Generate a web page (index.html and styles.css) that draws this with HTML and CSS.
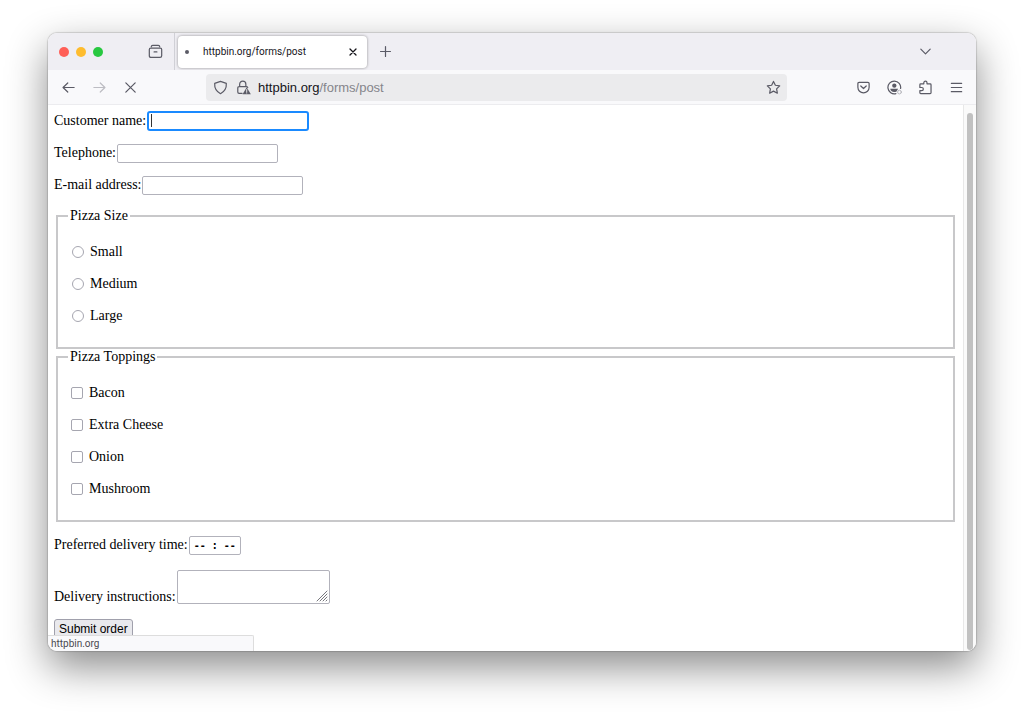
FILE: index.html
```
<!DOCTYPE html>
<html lang="en">
<head>
<meta charset="utf-8">
<title>httpbin.org/forms/post</title>
<link rel="stylesheet" href="styles.css">
</head>
<body>
<div class="window">
  <header class="tabstrip">
    <div class="lights"><span class="light red"></span><span class="light yellow"></span><span class="light green"></span></div>
    <button class="icon-btn view-btn" aria-label="Recent browsing">
      <svg class="icon" viewBox="0 0 16 16"><path d="M3.500 2.800Q3.600 1.400 5 1.400h6q1.400 0 1.500 1.400M2.800 4.400h10.400Q14.600 4.400 14.600 5.800v6.700q0 1.800-1.800 1.800H3.200q-1.800 0-1.800-1.800V5.800q0-1.400 1.400-1.400zM6.500 8.500h3"/></svg>
    </button>
    <div class="tab">
      <span class="loading"></span>
      <span class="tab-title">httpbin.org/forms/post</span>
      <button class="icon-btn close" aria-label="Close tab"><svg class="icon-small" viewBox="0 0 8 8"><path d="M1 1l6 6M7 1L1 7"/></svg></button>
    </div>
    <button class="icon-btn new-tab" aria-label="New tab"><svg class="icon" viewBox="0 0 16 16"><path d="M8 2.700v10.600M2.700 8h10.600"/></svg></button>
    <button class="icon-btn all-tabs" aria-label="List all tabs"><svg class="icon" viewBox="0 0 16 16"><path d="M3 5.500l5 5 5-5"/></svg></button>
  </header>
  <nav class="toolbar" aria-label="Navigation">
    <div class="group">
      <button class="icon-btn" aria-label="Back"><svg class="icon" viewBox="0 0 16 16"><path d="M14 8H2.500M7.200 3.200L2.200 8l5 4.800"/></svg></button>
      <button class="icon-btn faded" aria-label="Forward"><svg class="icon" viewBox="0 0 16 16"><path d="M2 8h11.500M8.800 3.200l5 4.800-5 4.800"/></svg></button>
      <button class="icon-btn" aria-label="Stop"><svg class="icon" viewBox="0 0 16 16"><path d="M3 3l10 10M13 3L3 13"/></svg></button>
    </div>
    <div class="urlbar">
      <button class="icon-btn" aria-label="Tracking protection"><svg class="icon" viewBox="0 0 16 16"><path d="M8 1.400l6.200 2.200q.5 7.500-6.200 11Q1.300 11.100 1.800 3.600z"/></svg></button>
      <button class="icon-btn" aria-label="Connection is not secure"><svg class="icon" viewBox="0 0 16 16"><path d="M3.900 7V4.500a3.300 3.300 0 0 1 6.600 0V7M6.500 14.200H3.300q-1.400 0-1.400-1.400V8.300Q1.900 7 3.300 7h7.900q1.300 0 1.300 1"/><path class="solid" d="M11.400 7.600l4.400 7.600H7z"/><path class="light-line" d="M11.400 10.200v2.200M11.400 13.500v.4"/></svg></button>
      <div class="address" role="textbox" aria-label="Address" contenteditable="true" spellcheck="false"><span class="host">httpbin.org</span>/forms/post</div>
      <button class="icon-btn" aria-label="Bookmark"><svg class="icon" viewBox="0 0 16 16"><path d="M8 1.500l2 4.100 4.600.7-3.300 3.200.8 4.600L8 11.900l-4.100 2.200.8-4.600L1.400 6.300 6 5.600z"/></svg></button>
    </div>
    <div class="group">
      <button class="icon-btn" aria-label="Pocket"><svg class="icon" viewBox="0 0 16 16"><path d="M3.300 2.500h9.400q1.300 0 1.300 1.300v4a6 6 0 0 1-12 0v-4q0-1.300 1.300-1.300zM5.100 6.400L8 9.100l2.900-2.700"/></svg></button>
      <button class="icon-btn" aria-label="Account"><svg class="icon" viewBox="0 0 16 16"><path d="M9.500 14.500A6.800 6.800 0 1 1 14.500 9"/><circle class="solid" cx="7.800" cy="6" r="2.300"/><path class="solid" d="M3.500 9.300h8.400l-2 3.100q-3.200 1.300-5.200-.6-1.200-1.200-1.200-2.500z"/><circle class="badge-dot" cx="13.300" cy="12.900" r="2"/></svg></button>
      <button class="icon-btn" aria-label="Extensions"><svg class="icon" viewBox="0 0 16 16"><path d="M2 6.200V5q0-.9.900-.9h3.300V2.900a1.700 1.700 0 0 1 3.400 0v1.200h3.300q1 0 1 .9v8.700q0 .9-1 .9h-10q-.9 0-.9-.9v-2.300h2a1.600 1.600 0 0 0 0-3.400H2z"/></svg></button>
      <button class="icon-btn" aria-label="Menu"><svg class="icon" viewBox="0 0 16 16"><path d="M2.500 3.500h11M2.500 8h11M2.500 12.500h11"/></svg></button>
    </div>
  </nav>
  <div class="viewport">
    <form class="order">
      <div class="row"><label for="name">Customer name:</label><input class="field focused" id="name" type="text"></div>
      <div class="row"><label for="tel">Telephone:</label><input class="field" id="tel" type="tel"></div>
      <div class="row"><label for="email">E-mail address:</label><input class="field" id="email" type="email"></div>
      <fieldset class="choices">
        <legend>Pizza Size</legend>
        <label class="choice"><input class="radio" type="radio" name="size">Small</label>
        <label class="choice"><input class="radio" type="radio" name="size">Medium</label>
        <label class="choice"><input class="radio" type="radio" name="size">Large</label>
      </fieldset>
      <fieldset class="choices toppings">
        <legend>Pizza Toppings</legend>
        <label class="choice"><input class="check" type="checkbox">Bacon</label>
        <label class="choice"><input class="check" type="checkbox">Extra Cheese</label>
        <label class="choice"><input class="check" type="checkbox">Onion</label>
        <label class="choice"><input class="check" type="checkbox">Mushroom</label>
      </fieldset>
      <div class="row"><label for="time">Preferred delivery time:</label><input class="field time" id="time" type="text" value="-- : --"></div>
      <div class="row instructions"><label for="notes">Delivery instructions:</label><span class="area"><textarea class="field notes" id="notes"></textarea><svg class="grip" viewBox="0 0 12 12"><path d="M1 11L11 1M4 11l7-7M7 11l4-4M10 11l1-1"/></svg></span></div>
      <button class="submit" type="button">Submit order</button>
    </form>
    <div class="scrollbar"><div class="thumb"></div></div>
    <div class="status">httpbin.org</div>
  </div>
</div>
</body>
</html>
```
FILE: styles.css
```
* { box-sizing: border-box; }
body {
  margin: 0;
  min-height: 100vh;
  padding: 33px 48px 63px;
  display: flex;
  background: #fff;
  color: #000;
  font-family: "Liberation Serif", serif;
  font-size: 14px;
}
.window {
  flex: 1;
  min-width: 0;
  display: flex;
  flex-direction: column;
  border-radius: 9px;
  overflow: hidden;
  background: #fff;
  box-shadow: 0 0 1px 1px rgba(0, 0, 0, .14), 0 16px 40px rgba(0, 0, 0, .46);
}
button { font: inherit; color: inherit; }
.icon-btn {
  flex: none;
  display: flex;
  align-items: center;
  justify-content: center;
  width: 16px;
  height: 16px;
  padding: 0;
  border: 0;
  background: none;
  color: #5b5b66;
}
.icon { width: 15px; height: 15px; }
.icon-small { width: 8px; height: 8px; }
svg {
  display: block;
  fill: none;
  stroke: currentColor;
  stroke-width: 1.3;
  stroke-linecap: round;
  stroke-linejoin: round;
}
.solid { fill: currentColor; stroke: none; }
.light-line { stroke: #ebebed; stroke-width: 1; }
.badge-dot { stroke: #b4b4bb; stroke-width: 1; }
.faded { color: #bdbdc3; }

.tabstrip {
  display: flex;
  align-items: center;
  height: 37px;
  padding: 0 43px 0 11px;
  background: #efeef3;
}
.lights { display: flex; gap: 7px; }
.light { width: 10px; height: 10px; border-radius: 50%; }
.red { background: #ff5f57; }
.yellow { background: #febc2e; }
.green { background: #28c840; }
.view-btn { margin-left: 44px; }
.tab {
  display: flex;
  align-items: center;
  width: 189px;
  height: 32px;
  margin-left: 15px;
  padding: 0 6px 0 7px;
  border-radius: 4px;
  background: #fff;
  box-shadow: 0 0 3px rgba(0, 0, 0, .4);
  font-family: Roboto, sans-serif;
  font-size: 10px;
  color: #15141a;
}
.tab::before {
  content: "";
  width: 1px;
  height: 37px;
  margin-left: -11px;
  margin-right: 10px;
  background: #d0d0d6;
}
.loading { width: 4px; height: 4px; border-radius: 50%; background: #5b5b66; }
.tab-title { flex: 1; margin-left: 14px; white-space: nowrap; }
.close { color: #15141a; }
.new-tab { margin-left: 10px; }
.all-tabs { margin-left: auto; }

.toolbar {
  display: flex;
  align-items: center;
  justify-content: space-between;
  height: 35px;
  padding: 0 12px;
  border-bottom: 1px solid #ececef;
  background: #f9f9fb;
}
.group { display: flex; gap: 15px; }
.urlbar {
  flex: 1;
  display: flex;
  align-items: center;
  gap: 7px;
  height: 27px;
  margin: 0 68px;
  padding: 0 6px;
  border-radius: 4px;
  background: #ebebed;
}
.address {
  flex: 1;
  font-family: "Liberation Sans", sans-serif;
  font-size: 13px;
  color: #85858b;
  white-space: nowrap;
}
.host { color: #15141a; }

.viewport {
  position: relative;
  flex: 1;
  display: flex;
}
.order { flex: 1; padding: 6px 6px 0; }
.row {
  display: flex;
  align-items: center;
  gap: 1px;
  min-height: 20px;
  margin-bottom: 12px;
}
.field {
  width: 161px;
  height: 19px;
  padding: 1px 4px;
  border: 1px solid #b2b2bb;
  border-radius: 2px;
  background: #fff;
}
.focused {
  width: 162px;
  height: 20px;
  border: 2px solid #1a8aff;
  border-radius: 3px;
  background: linear-gradient(#333, #333) 2px 1px / 1px 13px no-repeat #fff;
}
.choices {
  display: flex;
  flex-direction: column;
  gap: 12px;
  min-width: 0;
  margin: 13px 2px 0;
  padding: 18px 10px 21px;
  border: 2px solid #c8c8ca;
}
.toppings { margin: 0 2px 13px; }
legend { height: 16px; padding: 0 2px; line-height: 16px; }
.choice { display: flex; align-items: center; align-self: flex-start; height: 20px; }
.radio, .check {
  appearance: none;
  width: 12px;
  height: 12px;
  margin: 0 6px 0 4px;
  border: 1px solid #a6a6b0;
  background: #fff;
}
.radio { border-radius: 50%; }
.check { margin-left: 3px; border-radius: 2px; }
.time {
  width: 52px;
  padding: 0;
  font-family: "DejaVu Sans Mono", monospace;
  font-size: 10px;
  font-weight: bold;
  text-align: center;
}
.instructions { align-items: flex-end; margin: 15px 0; line-height: 14px; }
.area { position: relative; display: flex; }
.notes { width: 153px; height: 34px; resize: none; }
.grip {
  position: absolute;
  right: 2px;
  bottom: 2px;
  width: 12px;
  height: 12px;
  stroke: #77777d;
  stroke-width: 1;
}
.submit {
  display: block;
  height: 20px;
  padding: 0 4px;
  border: 1px solid #a0a0ac;
  border-radius: 3px;
  background: #e9e9ed;
  font-family: "Liberation Sans", sans-serif;
  font-size: 12px;
}
.scrollbar {
  display: flex;
  width: 13px;
  padding: 8px 3px 1px;
  border-left: 1px solid #e8e8e8;
  background: #fafafa;
}
.thumb { flex: 1; border-radius: 4px; background: #c1c1c1; }
.status {
  position: absolute;
  left: 0;
  bottom: 0;
  width: 206px;
  height: 16px;
  padding-left: 3px;
  border: 1px solid #ddd;
  border-width: 1px 1px 0 0;
  border-top-right-radius: 2px;
  background: #f9f9fb;
  color: #4a4a50;
  font-family: Roboto, sans-serif;
  font-size: 10px;
  line-height: 16px;
}
```
